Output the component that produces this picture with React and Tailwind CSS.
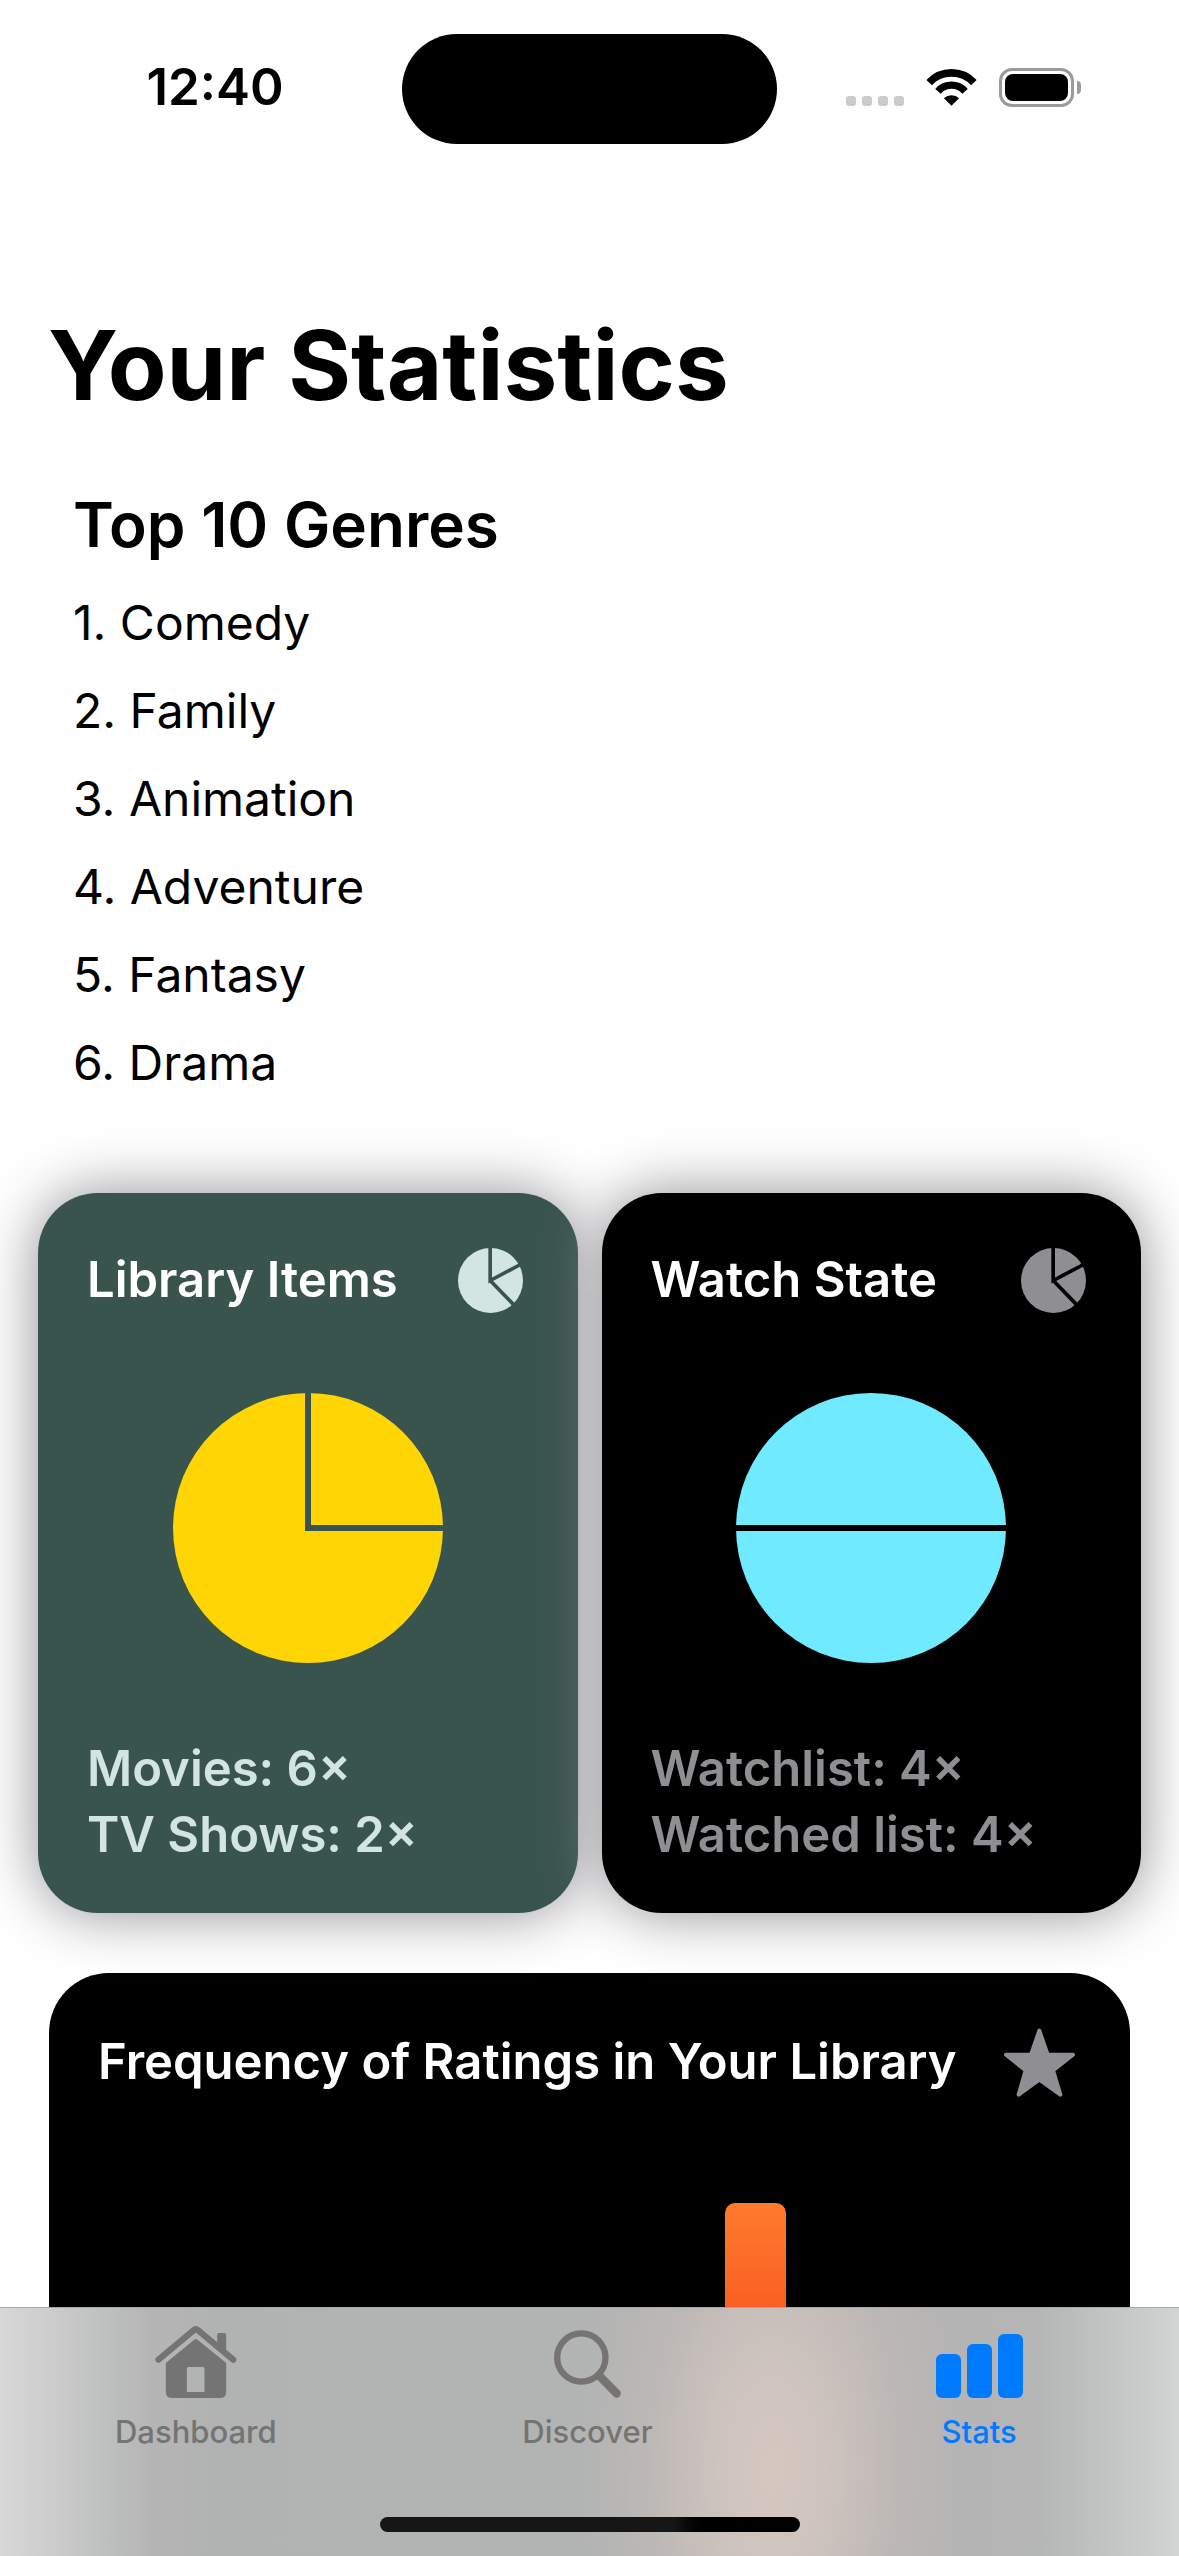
const genres = ['Comedy', 'Family', 'Animation', 'Adventure', 'Fantasy', 'Drama'];

function WifiIcon() {
  return (
    <svg viewBox="378 87 152 112" className="h-[37px] w-[51px]" aria-label="Wi-Fi">
      <g fill="none" stroke="black">
        <path d="M386.4 128A92.5 92.5 0 0 1 521.6 128" strokeWidth="23" />
        <path d="M413 154.5A55 55 0 0 1 495 154.5" strokeWidth="22" />
      </g>
      <path d="M454 198L431 175.5A33 33 0 0 1 477 175.5Z" fill="black" />
    </svg>
  );
}

function StatusBar() {
  return (
    <header className="grid grid-cols-[1fr_375px_1fr] items-center pt-[34px]">
      <time className="pb-1 pl-7 text-center text-[51px] leading-[60px] font-semibold">12:40</time>
      <div className="h-[110px] rounded-full bg-black" />
      <div className="flex items-center justify-end gap-[22px] pr-[98px] pb-1">
        <div className="flex gap-1.5 self-end pb-px" aria-label="No signal">
          {[0, 1, 2, 3].map((dot) => (
            <span key={dot} className="size-2.5 rounded-[3px] bg-[#cbcbcb]" />
          ))}
        </div>
        <WifiIcon />
        <div className="flex items-center gap-[3px]" aria-label="Battery full">
          <div className="h-[39px] w-[75px] rounded-[13px] border-3 border-[#9b9b9b] p-[3px]">
            <div className="h-full rounded-[8px] bg-black" />
          </div>
          <div className="h-[13px] w-1 rounded-r-full bg-[#9b9b9b]" />
        </div>
      </div>
    </header>
  );
}

function PieIcon({ className, gap }) {
  return (
    <svg viewBox="38 35 196 196" className={`mr-1.5 size-[65px] shrink-0 ${className}`} aria-hidden="true">
      <circle cx="136" cy="133" r="98" fill="currentColor" />
      <path d="M135 30V133L228 84M135 133L208 208" fill="none" stroke={gap} strokeWidth="11" />
    </svg>
  );
}

function StarIcon() {
  return (
    <svg viewBox="42 49 213 207" className="mr-1.5 h-[69px] w-[71px] shrink-0 text-[#8e8e93]" aria-hidden="true">
      <path
        d="M148 57L173 129L249 129L189 176L211 249L148 204L86 249L107 176L48 129L123 129Z"
        fill="currentColor"
        stroke="currentColor"
        strokeWidth="12"
        strokeLinejoin="round"
      />
    </svg>
  );
}

function StatCard({ title, cardClass, tone, gap, slices, pieColor, rows }) {
  return (
    <section className={`rounded-[60px] px-[49px] pt-[54px] pb-[45px] shadow-[0_0_60px_#8e8e93] ${cardClass}`}>
      <div className="flex items-center justify-between">
        <h3 className="text-[49px] leading-[66px] font-semibold whitespace-nowrap text-white">{title}</h3>
        <PieIcon className={tone} gap={gap} />
      </div>
      <svg viewBox="0 0 270 270" className="mx-auto mt-20 size-[270px]" role="img" aria-label={`${title} chart`}>
        <circle cx="135" cy="135" r="135" fill={pieColor} />
        <path d={slices} fill="none" stroke={gap} strokeWidth="6" />
      </svg>
      <div className={`mt-[73px] text-[49px] leading-[66px] font-semibold whitespace-nowrap ${tone}`}>
        {rows.map((row) => (
          <p key={row}>{row}</p>
        ))}
      </div>
    </section>
  );
}

function HomeIcon() {
  return (
    <svg viewBox="45 72 245 216" className="h-[72px] w-[82px]" aria-hidden="true">
      <path
        d="M55 173L160 85Q167 79 174 85L279 173"
        fill="none"
        stroke="currentColor"
        strokeWidth="19"
        strokeLinecap="round"
      />
      <path d="M231 128V99Q231 93 237 93H252Q258 93 258 99V152Z" fill="currentColor" />
      <path
        d="M77 183L162 113Q167 109 172 113L258 183V269Q258 288 239 288H96Q77 288 77 269ZM140 270H193V200Q193 195 188 195H145Q140 195 140 200Z"
        fill="currentColor"
        fillRule="evenodd"
      />
    </svg>
  );
}

function SearchIcon() {
  return (
    <svg viewBox="1248 89 201 203" className="h-[68px] w-[67px]" aria-hidden="true">
      <g fill="none" stroke="currentColor">
        <circle cx="1330" cy="171" r="72.5" strokeWidth="19" />
        <path d="M1384 226L1436 279" strokeWidth="25" strokeLinecap="round" />
      </g>
    </svg>
  );
}

function BarsIcon() {
  return (
    <svg viewBox="114 93 261 192" className="h-16 w-[87px]" fill="currentColor" aria-hidden="true">
      <rect x="114" y="153" width="75" height="132" rx="18" />
      <rect x="207" y="123" width="75" height="162" rx="18" />
      <rect x="300" y="93" width="75" height="192" rx="18" />
    </svg>
  );
}

const tabs = [
  { label: 'Dashboard', Icon: HomeIcon, color: 'text-[#737473]' },
  { label: 'Discover', Icon: SearchIcon, color: 'text-[#757472]' },
  { label: 'Stats', Icon: BarsIcon, color: 'text-[#007aff]' },
];

function TabBar() {
  return (
    <nav className="shrink-0 border-t border-[#a8a8a8] bg-[radial-gradient(ellipse_190px_380px_at_65.5%_65%,#d6c7c0,#d4c7c1cc_30%,#c6bcb880_65%,transparent),linear-gradient(to_right,#d8d8d8,#cacbca_5%,#bcc0be_9%,#b6b5b5_13%,#b0b3b2_18%,#b2b4b3_45%,#b5b4b4_80%,#b4b6b5_88%,#c4c7c6_95%,#d3d4d4)] pt-3">
      <div className="grid grid-cols-3 pr-1">
        {tabs.map(({ label, Icon, color }) => (
          <button key={label} type="button" className={`flex flex-col items-center gap-4 ${color}`}>
            <span className="flex h-[78px] items-end">
              <Icon />
            </span>
            <span className="text-[31px] leading-9 font-medium">{label}</span>
          </button>
        ))}
      </div>
      <div className="mx-auto mt-[67px] mb-6 h-[15px] w-[420px] rounded-full bg-linear-to-r from-[#161616] from-70% to-black to-80%" />
    </nav>
  );
}

export default function App() {
  return (
    <div className="flex h-screen flex-col overflow-hidden bg-white font-[Inter,sans-serif] text-black">
      <main className="min-h-0 flex-1 overflow-hidden">
        <StatusBar />
        <h1 className="mt-[161px] px-12 text-[96px] leading-[120px] font-bold">Your Statistics</h1>
        <section className="mt-[60px] px-[73px]">
          <h2 className="text-[62px] leading-[80px] font-semibold">Top 10 Genres</h2>
          <ol className="mt-[14px] text-[48px] leading-[88px]">
            {genres.map((genre, i) => (
              <li key={genre}>
                {i + 1}. {genre}
              </li>
            ))}
          </ol>
        </section>
        <div className="mt-[86px] grid grid-cols-2 gap-6 px-[38px]">
          <StatCard
            title="Library Items"
            cardClass="bg-[#39534d]"
            tone="text-[#d2e5e0]"
            gap="#39534d"
            pieColor="#ffd506"
            slices="M135 0V135H270"
            rows={['Movies: 6×', 'TV Shows: 2×']}
          />
          <StatCard
            title="Watch State"
            cardClass="bg-black"
            tone="text-[#8e8e93]"
            gap="#000000"
            pieColor="#70eaff"
            slices="M0 135H270"
            rows={['Watchlist: 4×', 'Watched list: 4×']}
          />
        </div>
        <section className="mx-[49px] mt-15 h-[800px] rounded-[60px] bg-black px-[49px] pt-[53px]">
          <div className="flex items-center justify-between">
            <h3 className="text-[49px] leading-[72px] font-semibold whitespace-nowrap text-white">
              Frequency of Ratings in Your Library
            </h3>
            <StarIcon />
          </div>
          <div className="mt-[105px] grid grid-cols-[627fr_61fr_295fr]">
            <div className="col-start-2 h-[400px] rounded-t-[10px] bg-linear-to-b/srgb from-[#ff7b2e] to-[#e91000]" />
          </div>
        </section>
      </main>
      <TabBar />
    </div>
  );
}
